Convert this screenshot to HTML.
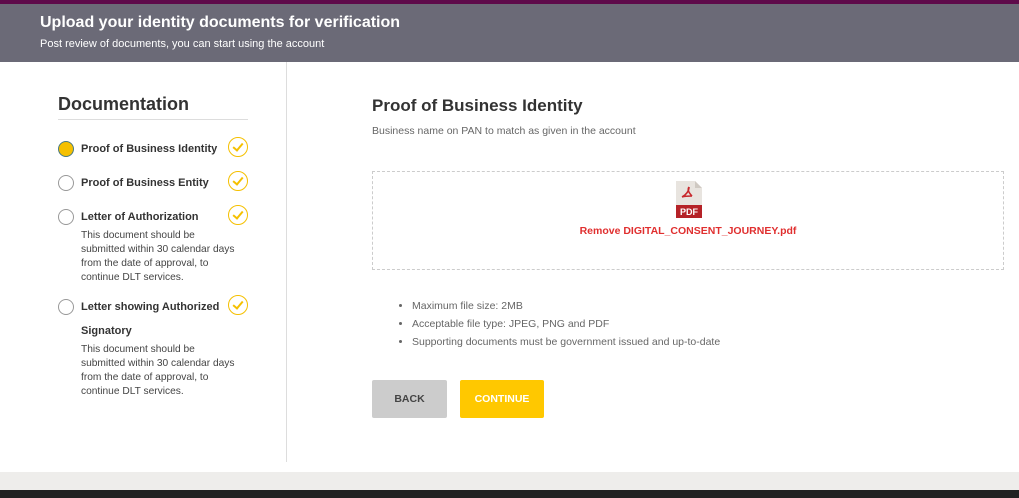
<!DOCTYPE html>
<html><head><style>
*{margin:0;padding:0;box-sizing:border-box}
body{width:1019px;height:498px;overflow:hidden;background:#fff;font-family:"Liberation Sans",sans-serif;position:relative;color:#333}
.top{position:absolute;left:0;top:0;width:1019px;height:4px;background:#5e0a4a}
.hdr{position:absolute;left:0;top:4px;width:1019px;height:58px;background:#6b6a77;color:#fff}
.hdr h1{position:absolute;left:40px;top:10px;font-size:16px;font-weight:bold}
.hdr p{position:absolute;left:40px;top:34px;font-size:11px}
.div{position:absolute;left:286px;top:62px;width:1px;height:400px;background:#ddd}
.gray{position:absolute;left:0;top:472px;width:1019px;height:18px;background:#eeedeb}
.dark{position:absolute;left:0;top:490px;width:1019px;height:8px;background:#222}
.doc{position:absolute;left:58px;top:94px;width:190px;font-size:18px;font-weight:bold;border-bottom:1px solid #ddd;padding-bottom:4px;color:#333}
.item{position:absolute;left:58px;font-size:11px;font-weight:bold;color:#333}
.rad{position:absolute;left:58px;width:16px;height:16px;border-radius:50%;border:1px solid #999;background:#fff}
.chk{position:absolute;left:228px;width:20px;height:20px;border-radius:50%;border:1.5px solid #f5c000}
.chk:after{content:"";position:absolute;left:6px;top:3px;width:4px;height:8px;border:solid #f5c000;border-width:0 2px 2px 0;transform:rotate(40deg)}
.note{position:absolute;left:81px;font-size:10.2px;line-height:14px;color:#444;width:168px}
h2{position:absolute;left:372px;top:96px;font-size:17px;font-weight:bold;color:#333}
.sub{position:absolute;left:372px;top:125px;font-size:10.5px;color:#666}
.box{position:absolute;left:372px;top:171px;width:632px;height:99px;border:1px dashed #ccc}
.fn{position:absolute;left:0;width:100%;top:53px;text-align:center;color:#e02f2f;font-size:10.5px;font-weight:bold}
ul{position:absolute;left:412px;top:297px;font-size:10.5px;color:#666;line-height:18px}
.btn{position:absolute;top:380px;height:38px;font-size:10.5px;font-weight:bold;text-align:center;line-height:38px;border-radius:2px}
</style></head><body>
<div class="top"></div>
<div class="hdr"><h1>Upload your identity documents for verification</h1><p>Post review of documents, you can start using the account</p></div>
<div class="div"></div>
<div class="doc">Documentation</div>
<div class="rad" style="top:141px;background:#f5c000;border-color:#4a7a80"></div><div class="item" style="left:81px;top:143px">Proof of Business Identity</div><div class="chk" style="top:137px"></div>
<div class="rad" style="top:175px"></div><div class="item" style="left:81px;top:177px">Proof of Business Entity</div><div class="chk" style="top:171px"></div>
<div class="rad" style="top:209px"></div><div class="item" style="left:81px;top:211px">Letter of Authorization</div><div class="chk" style="top:205px"></div>
<div class="note" style="top:229px">This document should be<br>submitted within 30 calendar days<br>from the date of approval, to<br>continue DLT services.</div>
<div class="rad" style="top:299px"></div><div class="item" style="left:81px;top:301px">Letter showing Authorized</div><div class="chk" style="top:295px"></div>
<div class="item" style="left:81px;top:325px">Signatory</div>
<div class="note" style="top:343px">This document should be<br>submitted within 30 calendar days<br>from the date of approval, to<br>continue DLT services.</div>
<h2>Proof of Business Identity</h2>
<div class="sub">Business name on PAN to match as given in the account</div>
<div class="box">
<svg style="position:absolute;left:303px;top:9px" width="26" height="37" viewBox="0 0 26 37"><path d="M0 0h19l7 7v30H0z" fill="#e8e4df"/><path d="M19 0v7h7z" fill="#cfc9c2"/><path d="M13 6c-2 3 0 6 3 9M13 6c0 4-3 8-7 10M6 16c3-1 7-1 10-1" stroke="#c8282d" stroke-width="1.6" fill="none"/><rect x="0" y="24" width="26" height="13" fill="#b52227"/><text x="13" y="34" font-size="9" font-weight="bold" fill="#fff" text-anchor="middle" font-family="Liberation Sans">PDF</text></svg>
<div class="fn">Remove DIGITAL_CONSENT_JOURNEY.pdf</div></div>
<ul><li>Maximum file size: 2MB</li><li>Acceptable file type: JPEG, PNG and PDF</li><li>Supporting documents must be government issued and up-to-date</li></ul>
<div class="btn" style="left:372px;width:75px;background:#ccc;color:#444">BACK</div>
<div class="btn" style="left:460px;width:84px;background:#ffc800;color:#fff">CONTINUE</div>
<div class="gray"></div><div class="dark"></div>
</body></html>
